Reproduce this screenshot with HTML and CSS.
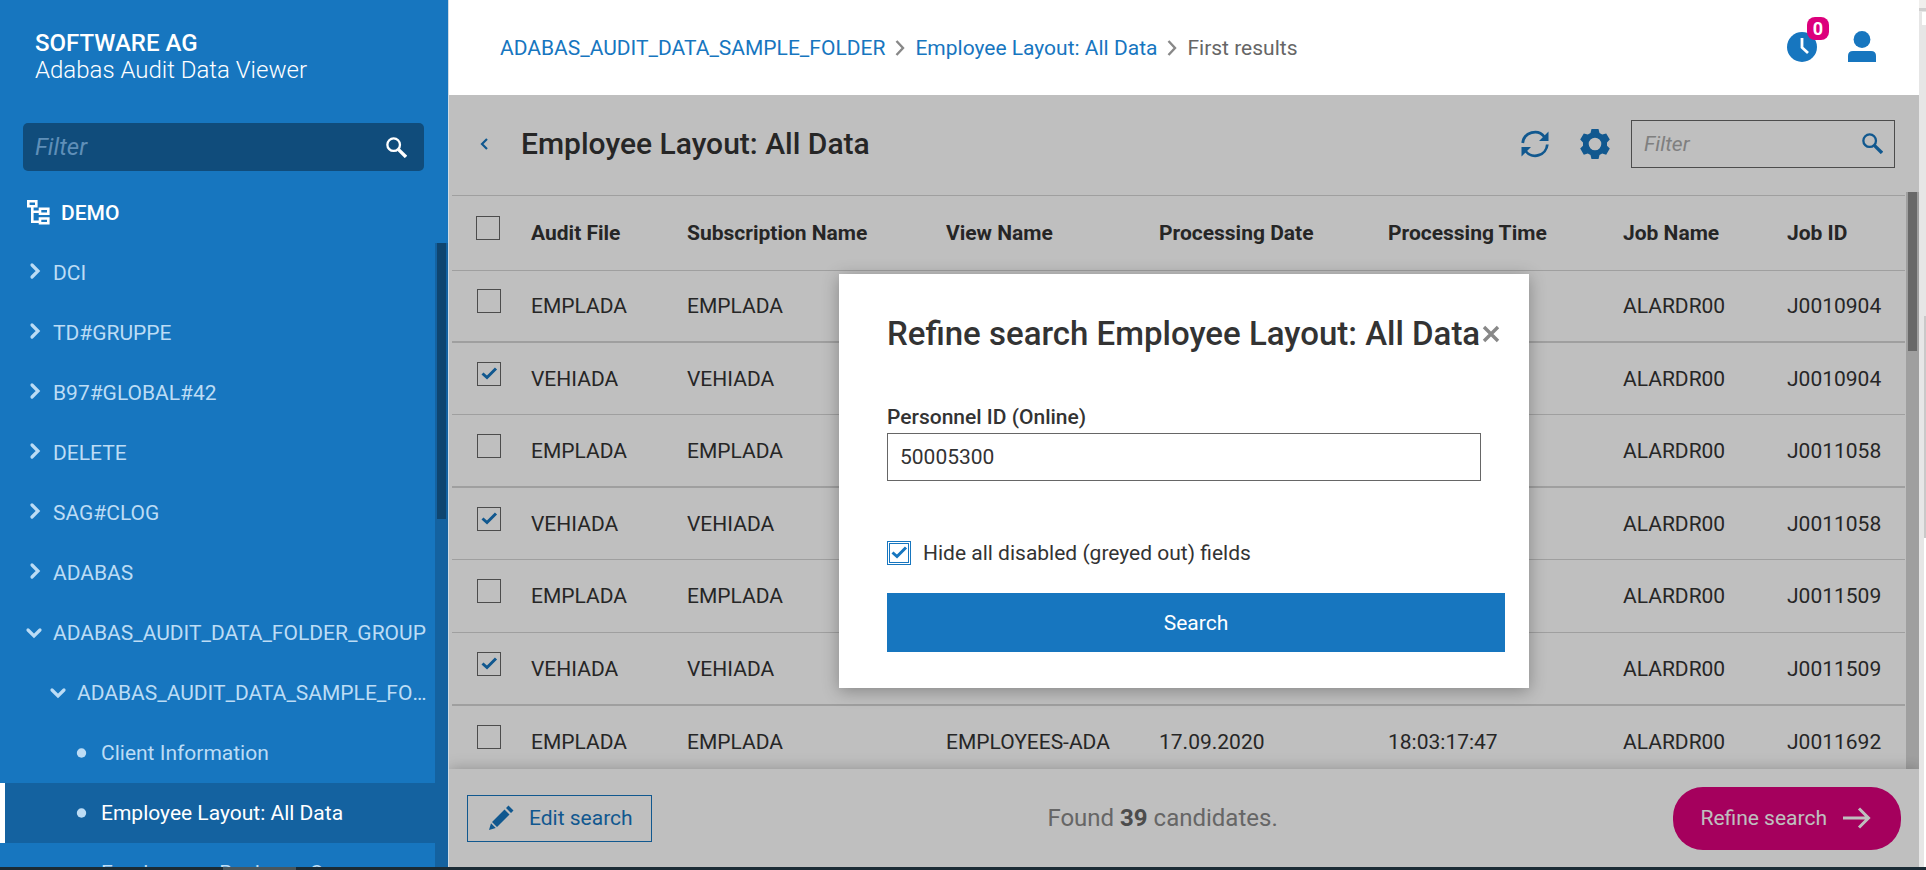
FILE: index.html
```html
<!DOCTYPE html>
<html lang="en">
<head>
<meta charset="utf-8">
<title>Adabas Audit Data Viewer</title>
<link rel="stylesheet" href="styles.css">
</head>
<body>
<svg class="sprite" aria-hidden="true">
  <symbol id="i-search" viewBox="0 0 20 20"><circle cx="7.3" cy="7.3" r="6" fill="none" stroke="currentColor" stroke-width="2.2"/><path d="M12 12l7 7" fill="none" stroke="currentColor" stroke-width="3.2"/></symbol>
  <symbol id="i-right" viewBox="0 0 24 24"><path d="M9 4l6 6-6 6" fill="none" stroke="currentColor" stroke-width="3.2" stroke-linecap="round"/></symbol>
  <symbol id="i-down" viewBox="0 0 24 24"><path d="M5 9l6 6 6-6" fill="none" stroke="currentColor" stroke-width="3.2" stroke-linecap="round"/></symbol>
  <symbol id="i-dot" viewBox="0 0 24 24"><circle cx="10.5" cy="12" r="4.7" fill="currentColor"/></symbol>
  <symbol id="i-crumb" viewBox="0 0 10 16"><path d="M1.5 1L8 8l-6.500 7" fill="none" stroke="currentColor" stroke-width="2.4"/></symbol>
</svg>
<div class="app">
  <aside class="sidebar">
    <div class="brand"><strong>SOFTWARE AG</strong><span>Adabas Audit Data Viewer</span></div>
    <div class="side-filter">
      <input type="text" placeholder="Filter" aria-label="Filter folders">
      <button type="button" aria-label="Search folders"><svg width="21" height="21"><use href="#i-search"/></svg></button>
    </div>
    <div class="root">
      <svg width="23" height="25" viewBox="0 0 23 25" fill="none" stroke="currentColor" stroke-width="2.600"><path d="M1.300 1.300h8v5h-8zM5.300 6.500v15.200h7M5.300 11.700h7M13 8.800h8.300v5H13zM13 18.500h8.300v4.700H13z"/></svg>
      <span>DEMO</span>
    </div>
    <div class="tree-area">
      <nav class="tree">
        <a href="#"><svg><use href="#i-right"/></svg><span>DCI</span></a>
        <a href="#"><svg><use href="#i-right"/></svg><span>TD#GRUPPE</span></a>
        <a href="#"><svg><use href="#i-right"/></svg><span>B97#GLOBAL#42</span></a>
        <a href="#"><svg><use href="#i-right"/></svg><span>DELETE</span></a>
        <a href="#"><svg><use href="#i-right"/></svg><span>SAG#CLOG</span></a>
        <a href="#"><svg><use href="#i-right"/></svg><span>ADABAS</span></a>
        <a href="#"><svg><use href="#i-down"/></svg><span>ADABAS_AUDIT_DATA_FOLDER_GROUP</span></a>
        <a href="#" class="level2"><svg><use href="#i-down"/></svg><span>ADABAS_AUDIT_DATA_SAMPLE_FOLDER</span></a>
        <a href="#" class="level3"><svg><use href="#i-dot"/></svg><span>Client Information</span></a>
        <a href="#" class="level3 current" aria-current="page"><svg><use href="#i-dot"/></svg><span>Employee Layout: All Data</span></a>
        <a href="#" class="level3"><svg><use href="#i-dot"/></svg><span>Employees - Business Cases</span></a>
      </nav>
      <div class="track side-track"><div class="thumb"></div></div>
    </div>
  </aside>

  <main class="main">
    <header class="topbar">
      <nav class="crumbs" aria-label="Breadcrumb">
        <a href="#">ADABAS_AUDIT_DATA_SAMPLE_FOLDER</a>
        <svg width="10" height="16"><use href="#i-crumb"/></svg>
        <a href="#">Employee Layout: All Data</a>
        <svg width="10" height="16"><use href="#i-crumb"/></svg>
        <span>First results</span>
      </nav>
      <div class="account">
        <button type="button" class="jobs" aria-label="Running jobs">
          <svg width="30" height="30" viewBox="0 0 30 30"><circle cx="15" cy="15" r="15" fill="currentColor"/><path d="M15 6v9.500l6 5.500" fill="none" stroke="#fff" stroke-width="2.800"/></svg>
          <span class="badge">0</span>
        </button>
        <button type="button" aria-label="User">
          <svg width="28" height="31" viewBox="0 0 28 31" fill="currentColor"><circle cx="14" cy="8.500" r="8.400"/><path d="M0 31v-6q0-5 5-5h18q5 0 5 5v6z"/></svg>
        </button>
      </div>
    </header>

    <div class="content">
      <div class="toolbar">
        <button type="button" class="back" aria-label="Back"><svg width="8" height="12" viewBox="0 0 8 12"><path d="M7 1L2 6l5 5" fill="none" stroke="currentColor" stroke-width="2.200"/></svg></button>
        <h1>Employee Layout: All Data</h1>
        <button type="button" class="tool" aria-label="Refresh">
          <svg width="28" height="28" viewBox="0 0 28 28"><path d="M1.700 13A12.200 12.200 0 0 1 23.500 7M26.300 14.500A12.200 12.200 0 0 1 4.500 21" fill="none" stroke="currentColor" stroke-width="2.800"/><path d="M27.500 1.500V11H18zM.5 26.500V17H10z" fill="currentColor"/></svg>
        </button>
        <button type="button" class="tool" aria-label="Settings">
          <svg width="30" height="30" viewBox="0 0 30 30"><path fill="currentColor" fill-rule="evenodd" d="M11.500 0h7l1 4 2.700 1.600 4-1.200L29.800 10.600 27 13.500v3.200l2.800 2.800-3.600 6.200-4-1.200-2.700 1.600-1 4h-7l-1-4-2.700-1.600-4 1.200L.2 19.500 3 16.700v-3.200L.2 10.600 3.800 4.400l4 1.200L10.500 4zM15 8.700a6.300 6.300 0 1 0 0 12.600 6.300 6.300 0 0 0 0-12.600z"/></svg>
        </button>
        <div class="grid-filter">
          <input type="text" placeholder="Filter" aria-label="Filter results">
          <button type="button" aria-label="Search results"><svg width="21" height="21"><use href="#i-search"/></svg></button>
        </div>
      </div>

      <div class="results">
        <div class="table-wrap">
          <table>
            <colgroup><col class="c-check"><col class="c-file"><col class="c-sub"><col class="c-view"><col class="c-date"><col class="c-time"><col class="c-job"><col class="c-id"></colgroup>
            <thead>
              <tr><th><input type="checkbox" aria-label="Select all"></th><th>Audit File</th><th>Subscription Name</th><th>View Name</th><th>Processing Date</th><th>Processing Time</th><th>Job Name</th><th>Job ID</th></tr>
            </thead>
            <tbody>
              <tr><td><input type="checkbox" aria-label="Select row 1"></td><td>EMPLADA</td><td>EMPLADA</td><td></td><td></td><td></td><td>ALARDR00</td><td>J0010904</td></tr>
              <tr><td><input type="checkbox" checked aria-label="Select row 2"></td><td>VEHIADA</td><td>VEHIADA</td><td></td><td></td><td></td><td>ALARDR00</td><td>J0010904</td></tr>
              <tr><td><input type="checkbox" aria-label="Select row 3"></td><td>EMPLADA</td><td>EMPLADA</td><td></td><td></td><td></td><td>ALARDR00</td><td>J0011058</td></tr>
              <tr><td><input type="checkbox" checked aria-label="Select row 4"></td><td>VEHIADA</td><td>VEHIADA</td><td></td><td></td><td></td><td>ALARDR00</td><td>J0011058</td></tr>
              <tr><td><input type="checkbox" aria-label="Select row 5"></td><td>EMPLADA</td><td>EMPLADA</td><td></td><td></td><td></td><td>ALARDR00</td><td>J0011509</td></tr>
              <tr><td><input type="checkbox" checked aria-label="Select row 6"></td><td>VEHIADA</td><td>VEHIADA</td><td></td><td></td><td></td><td>ALARDR00</td><td>J0011509</td></tr>
              <tr><td><input type="checkbox" aria-label="Select row 7"></td><td>EMPLADA</td><td>EMPLADA</td><td>EMPLOYEES-ADA</td><td>17.09.2020</td><td>18:03:17:47</td><td>ALARDR00</td><td>J0011692</td></tr>
            </tbody>
          </table>
        </div>
        <div class="track grid-track"><div class="thumb"></div></div>
      </div>

      <footer class="actions">
        <button type="button" class="edit">
          <svg width="26" height="26" viewBox="0 0 26 26" fill="currentColor"><path d="M16.500 4.500l5 5L9 22l-5-5zM18 3l2.500-2.500 5 5L23 8zM3 18.200L7.800 23 1 25z"/></svg>
          Edit search
        </button>
        <p>Found <strong>39</strong> candidates.</p>
        <button type="button" class="refine">
          Refine search
          <svg width="28" height="22" viewBox="0 0 28 22"><path d="M0 11h25M16 1.500L25.500 11 16 20.500" fill="none" stroke="currentColor" stroke-width="3"/></svg>
        </button>
      </footer>

      <div class="backdrop">
        <form class="dialog" role="dialog" aria-labelledby="dialog-title">
          <div class="dialog-head">
            <h2 id="dialog-title">Refine search Employee Layout: All Data</h2>
            <button type="button" class="close" aria-label="Close"><svg width="18" height="18" viewBox="0 0 18 18"><path d="M2 2l14 14M16 2L2 16" stroke="currentColor" stroke-width="3.400"/></svg></button>
          </div>
          <label class="field-label" for="personnel">Personnel ID (Online)</label>
          <input class="field" id="personnel" type="text" value="50005300">
          <label class="hide"><input type="checkbox" checked> Hide all disabled (greyed out) fields</label>
          <button type="button" class="submit">Search</button>
        </form>
      </div>
    </div>
  </main>
  <div class="window-edge"></div>
</div>
<div class="taskbar"></div>
</body>
</html>
```
FILE: styles.css
```css
* { box-sizing: border-box; }

:root {
  --blue: #1776bf;
  --pink: #dc007c;
  --text: #333;
  --line: #d5d5d5;
}

body {
  margin: 0;
  height: 100vh;
  display: flex;
  flex-direction: column;
  overflow: hidden;
  font: 21px/24px Roboto, "Liberation Sans", sans-serif;
  color: var(--text);
  background: #fff;
}

.sprite { position: absolute; width: 0; height: 0; }
svg { display: block; flex: none; }
h1, h2, p { margin: 0; }
a { text-decoration: none; }

button {
  padding: 0;
  border: 0;
  background: none;
  color: var(--blue);
  font: inherit;
  cursor: pointer;
}

input { font: inherit; color: inherit; outline: 0; }

.app { flex: 1; min-height: 0; display: flex; }

/* Sidebar */
.sidebar {
  flex: none;
  width: 448px;
  display: flex;
  flex-direction: column;
  background: var(--blue);
  color: #fff;
}

.brand {
  display: flex;
  flex-direction: column;
  padding: 30px 35px 0;
  font-size: 24px;
  line-height: 27px;
}
.brand strong { font-weight: 500; }
.brand span { font-weight: 300; }

.side-filter {
  display: flex;
  align-items: center;
  height: 48px;
  margin: 39px 24px 0 23px;
  padding: 0 17px 0 12px;
  border-radius: 5px;
  background: #104c7b;
}
.side-filter input {
  flex: 1;
  min-width: 0;
  padding: 0;
  border: 0;
  background: none;
  font-size: 24px;
}
.side-filter button { color: #fff; }
.side-filter input::placeholder { color: #5f8fb8; font-style: italic; opacity: 1; }

.root {
  display: flex;
  align-items: center;
  gap: 11px;
  height: 72px;
  padding: 12px 27px 0;
  font-weight: 500;
}
.root svg { margin-bottom: 2px; }

.tree-area { flex: 1; min-height: 0; display: flex; }
.tree { flex: 1; min-width: 0; overflow: hidden; }
.tree a {
  display: flex;
  align-items: center;
  gap: 6px;
  height: 60px;
  padding: 0 8px 0 23px;
  color: #bcdcf5;
}
.tree svg { width: 24px; height: 24px; }
.tree span { overflow: hidden; text-overflow: ellipsis; white-space: nowrap; }
.tree .level2 { padding-left: 47px; }
.tree .level3 { padding-left: 71px; }
.tree .current {
  padding-left: 66px;
  border-left: 5px solid #fff;
  background: #1462a0;
}
.tree .current span { color: #fff; }

.track { flex: none; width: 13px; padding: 0 2px; }
.side-track { background: #1462a0; }
.side-track .thumb { height: 276px; background: #0f456f; }

/* Main column */
.main {
  flex: 1;
  min-width: 0;
  display: flex;
  flex-direction: column;
  overflow: hidden;
  border-left: 1px solid #d0dbe4;
}

.topbar {
  flex: none;
  display: flex;
  align-items: center;
  justify-content: space-between;
  height: 95px;
  padding: 0 43px 0 51px;
}
.crumbs { display: flex; align-items: center; gap: 10px; color: #666; }
.crumbs a { color: var(--blue); }
.crumbs svg { color: #888; }
.account { display: flex; align-items: center; gap: 31px; padding-bottom: 2px; }
.jobs { position: relative; }
.badge {
  position: absolute;
  top: -15px;
  left: 20px;
  width: 22px;
  height: 23px;
  border-radius: 8px;
  background: var(--pink);
  color: #fff;
  font-size: 18px;
  font-weight: 700;
  line-height: 23px;
}

.content {
  flex: 1;
  min-height: 0;
  position: relative;
  display: flex;
  flex-direction: column;
}

.toolbar {
  flex: none;
  display: flex;
  align-items: center;
  height: 97px;
  padding: 0 24px 0 31px;
}
.back { margin-right: 33px; }
.toolbar h1 { flex: 1; font-size: 30px; font-weight: 500; line-height: 36px; }
.tool { margin-right: 31px; }
.tool + .grid-filter { margin-left: -10px; }
.grid-filter {
  display: flex;
  align-items: center;
  width: 264px;
  height: 48px;
  padding: 0 11px 0 12px;
  border: 1px solid #666;
}
.grid-filter input { flex: 1; min-width: 0; padding: 0; border: 0; background: none; }
.grid-filter input::placeholder { color: #aaa; font-style: italic; opacity: 1; }

.results { flex: 1; min-height: 0; display: flex; }
.table-wrap { flex: 1; min-width: 0; overflow: hidden; padding: 3px 1px 0 3px; }
.grid-track { background: var(--line); }
.grid-track .thumb { height: 159px; background: #8d8d8d; }

table { width: 100%; table-layout: fixed; border-collapse: separate; border-spacing: 0; }
.c-check { width: 79px; }
.c-file { width: 156px; }
.c-sub { width: 259px; }
.c-view { width: 213px; }
.c-date { width: 229px; }
.c-time { width: 235px; }
.c-job { width: 164px; }
.c-id { width: 118px; }
th, td { padding: 0; text-align: left; white-space: nowrap; border-bottom: 1px solid var(--line); }
th { height: 76px; font-weight: 700; border-top: 1px solid var(--line); }
td { height: 72px; }
tr:nth-child(3n) td, tr:nth-child(5) td { height: 73px; }
tbody tr:nth-child(1) td, tbody tr:nth-child(3) td, tbody tr:nth-child(6) td { border-bottom-width: 2px; }
th:first-child { padding: 0 0 10px 24px; }
td:first-child { padding: 0 0 10px 25px; }

input[type="checkbox"] {
  appearance: none;
  display: block;
  flex: none;
  width: 24px;
  height: 24px;
  margin: 0;
  border: 1px solid #666;
  background: center / 22px 22px no-repeat;
}
input[type="checkbox"]:checked {
  background-image: url("data:image/svg+xml,%3Csvg xmlns='http://www.w3.org/2000/svg' viewBox='0 0 22 22'%3E%3Cpath d='M4.500 10.500l4.500 4L18 5.500' fill='none' stroke='%231776bf' stroke-width='3'/%3E%3C/svg%3E");
}

.actions {
  flex: none;
  position: relative;
  display: flex;
  align-items: center;
  justify-content: space-between;
  height: 98px;
  padding: 0 18px;
  background: #fff;
  box-shadow: 0 0 14px rgba(0, 0, 0, .25);
}
.edit {
  display: flex;
  align-items: center;
  gap: 15px;
  height: 47px;
  padding: 0 18px 0 20px;
  border: 1px solid var(--blue);
}
.actions p { font-size: 24px; color: #888; }
.actions strong { color: #666; }
.refine {
  display: flex;
  align-items: center;
  gap: 16px;
  height: 63px;
  padding: 0 30px 0 27px;
  border-radius: 30px;
  background: var(--pink);
  color: #fff;
}

/* Dialog */
.backdrop {
  position: absolute;
  inset: 0;
  display: flex;
  align-items: center;
  justify-content: center;
  background: rgba(0, 0, 0, .25);
}
.dialog {
  display: flex;
  flex-direction: column;
  width: 690px;
  padding: 40px 24px 36px 48px;
  background: #fff;
  box-shadow: 0 3px 16px rgba(0, 0, 0, .3);
}
.dialog-head { display: flex; align-items: center; height: 40px; white-space: nowrap; }
.dialog h2 { width: 594px; flex: none; font-size: 33px; font-weight: 500; line-height: 40px; }
.close { margin-left: 1px; color: #888; }
.field-label { margin-top: 51px; font-weight: 500; }
.field {
  height: 48px;
  margin: 4px 24px 0 0;
  padding: 0 12px;
  border: 1px solid #666;
}
.hide { display: flex; align-items: center; gap: 12px; margin-top: 59px; line-height: 26px; }
.hide input[type="checkbox"] {
  border-color: var(--blue);
  box-shadow: inset 0 0 0 1px #fff, inset 0 0 0 2px var(--blue);
}
.submit { height: 59px; margin-top: 27px; background: var(--blue); color: #fff; }

/* Window frame */
.window-edge {
  flex: none;
  width: 7px;
  background:
    linear-gradient(#fff, #fff) 3px 12px / 4px 13px no-repeat,
    linear-gradient(#c9c9c9, #c9c9c9) 5px 316px / 2px 222px no-repeat,
    linear-gradient(#fff, #fff) 5px 538px / 2px 400px no-repeat,
    linear-gradient(#f0efed 8px, #cfcfcf 8px, #cfcfcf 11px, #e6e6e6 11px);
}
.taskbar {
  flex: none;
  height: 3px;
  background: linear-gradient(#49565c, #49565c) 223px 0 / 73px 3px no-repeat, #1b2b35;
}
```
